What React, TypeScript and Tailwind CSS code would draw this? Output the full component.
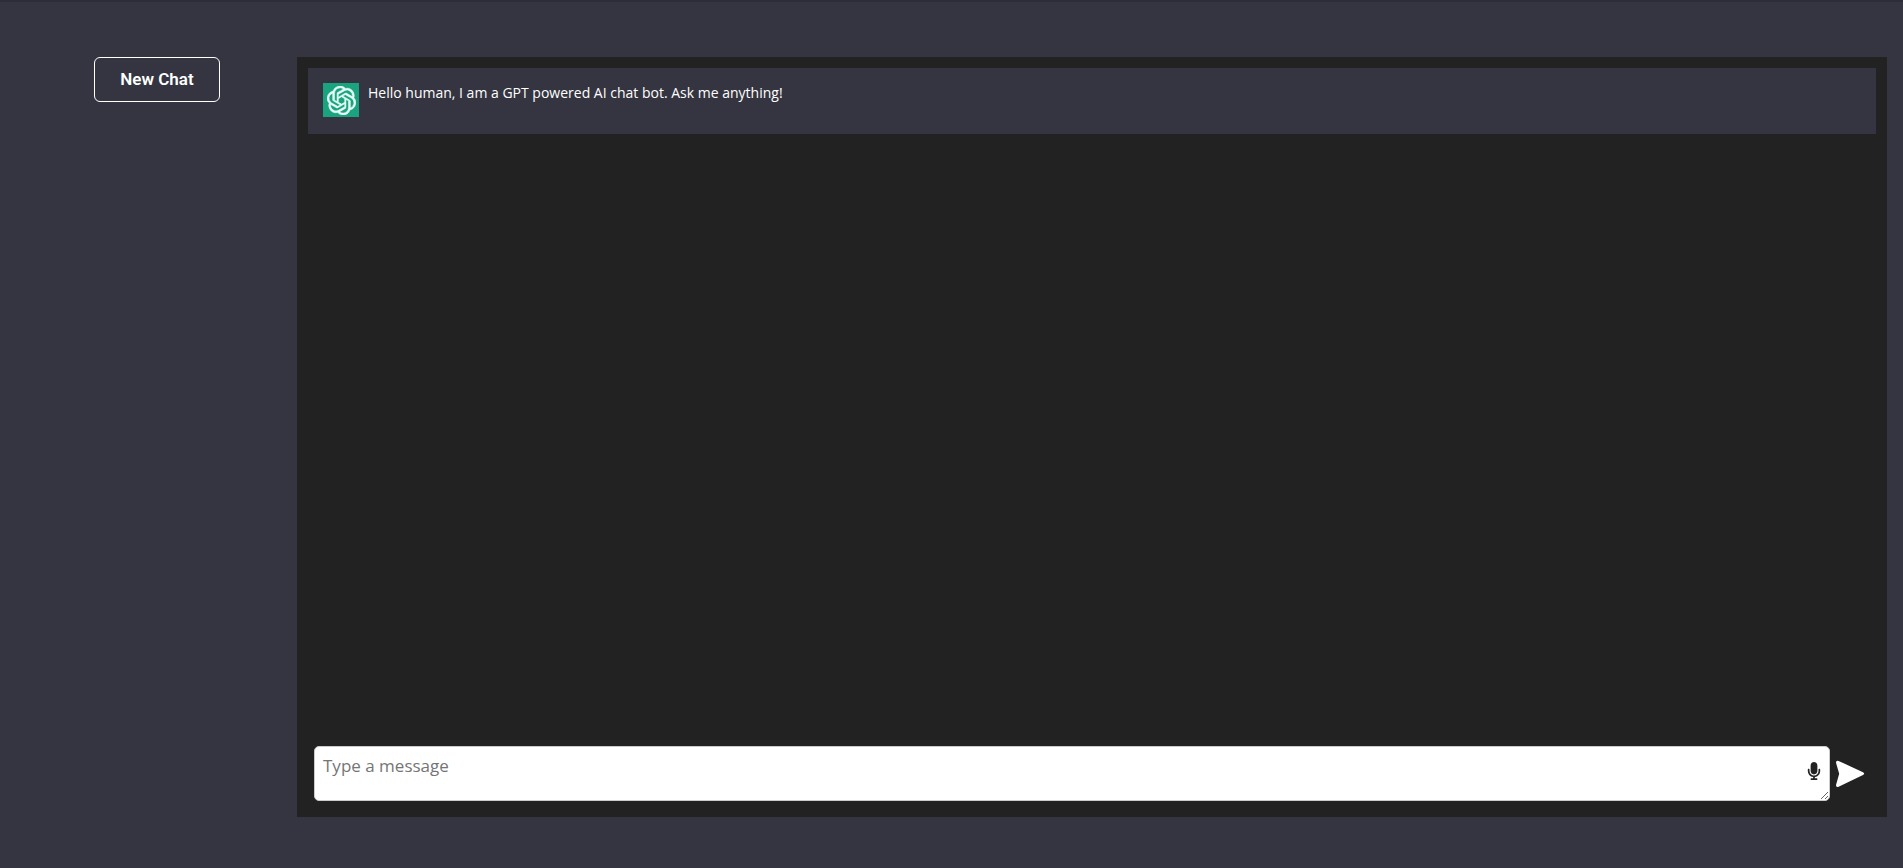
import { useState } from "react";
import { SiOpenai } from "react-icons/si";
import { FaMicrophone } from "react-icons/fa";

export default function App() {
  const [message, setMessage] = useState("");

  return (
    <div className="flex min-h-screen gap-[77px] border-t-2 border-[#2d2d38] bg-[#353541] pt-[55px] pr-4 pb-[51px] pl-[94px] font-['Open_Sans',sans-serif]">
      <aside className="w-[126px] shrink-0">
        <button
          type="button"
          onClick={() => setMessage("")}
          className="h-[45px] w-full rounded-md border border-white pt-px font-[Roboto,sans-serif] text-[17px] font-semibold text-white"
        >
          New Chat
        </button>
      </aside>

      <main className="flex min-w-0 flex-1 flex-col bg-[#222222]">
        <section className="flex-1 p-[11px]">
          <article className="flex h-[66px] gap-[9px] bg-[#353541] px-[15px] pt-[15px]">
            <div className="flex h-[34px] w-9 shrink-0 items-center justify-center bg-[#1aa37f] text-[#e8fff8]">
              <SiOpenai
                className="size-[29px] stroke-current [stroke-width:0.4]"
                aria-hidden="true"
              />
            </div>
            <p className="text-sm leading-5 font-normal text-white">
              Hello human, I am a GPT powered AI chat bot. Ask me anything!
            </p>
          </article>
        </section>

        <form
          onSubmit={(event) => event.preventDefault()}
          className="flex items-center gap-[5px] pr-[22px] pb-4 pl-[17px]"
        >
          <div className="relative flex min-w-0 flex-1">
            <textarea
              aria-label="Message"
              rows={1}
              value={message}
              onChange={(event) => setMessage(event.target.value)}
              placeholder="Type a message"
              className="h-[55px] w-full resize rounded-[5px] border border-[#cccccc] bg-white py-[7px] pr-10 pl-2 text-[17px] leading-6 text-[#222222] placeholder:text-[#757575]"
            />
            <button
              type="button"
              aria-label="Record voice"
              className="absolute top-4 right-[7px] text-[#222222]"
            >
              <FaMicrophone className="size-[18px]" />
            </button>
          </div>
          <button type="submit" aria-label="Send" className="shrink-0 text-white">
            <svg viewBox="0 0 30 28" className="h-7 w-[30px]" fill="currentColor">
              <path d="M3.6.9 28 12.2q2.4 1.4 0 2.8L3.6 26.7Q1 27.8 1 25L4.2 13.8 1 2.7Q1 0 3.6.9Z" />
            </svg>
          </button>
        </form>
      </main>
    </div>
  );
}
